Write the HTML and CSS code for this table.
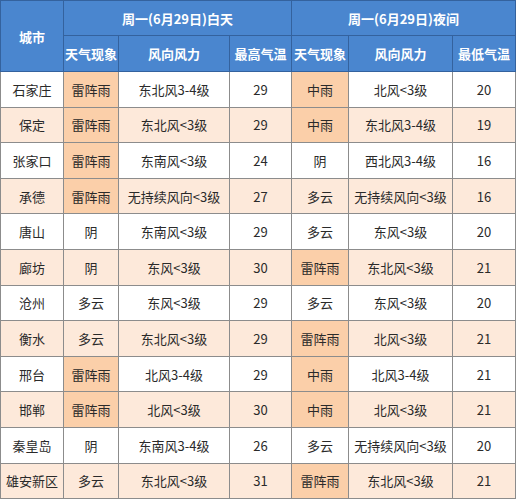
FILE: index.html
```html
<!DOCTYPE html>
<html lang="zh">
<head>
<meta charset="utf-8">
<link rel="stylesheet" href="styles.css">
</head>
<body>
<table class="wx">
  <colgroup>
    <col class="c1"><col class="c2"><col class="c3"><col class="c4"><col class="c5"><col class="c6"><col class="c7">
  </colgroup>
  <thead>
    <tr class="h1">
      <th rowspan="2">城市</th>
      <th colspan="3">周一(6月29日)白天</th>
      <th colspan="3">周一(6月29日)夜间</th>
    </tr>
    <tr class="h2">
      <th>天气现象</th><th>风向风力</th><th>最高气温</th>
      <th>天气现象</th><th>风向风力</th><th>最低气温</th>
    </tr>
  </thead>
  <tbody>
    <tr><td>石家庄</td><td class="hi">雷阵雨</td><td>东北风3-4级</td><td>29</td><td class="hi">中雨</td><td>北风&lt;3级</td><td>20</td></tr>
    <tr class="alt"><td>保定</td><td class="hi">雷阵雨</td><td>东北风&lt;3级</td><td>29</td><td class="hi">中雨</td><td>东北风3-4级</td><td>19</td></tr>
    <tr><td>张家口</td><td class="hi">雷阵雨</td><td>东南风&lt;3级</td><td>24</td><td>阴</td><td>西北风3-4级</td><td>16</td></tr>
    <tr class="alt"><td>承德</td><td class="hi">雷阵雨</td><td>无持续风向&lt;3级</td><td>27</td><td>多云</td><td>无持续风向&lt;3级</td><td>16</td></tr>
    <tr><td>唐山</td><td>阴</td><td>东南风&lt;3级</td><td>29</td><td>多云</td><td>东风&lt;3级</td><td>20</td></tr>
    <tr class="alt"><td>廊坊</td><td>阴</td><td>东风&lt;3级</td><td>30</td><td class="hi">雷阵雨</td><td>东北风&lt;3级</td><td>21</td></tr>
    <tr><td>沧州</td><td>多云</td><td>东风&lt;3级</td><td>29</td><td>多云</td><td>东风&lt;3级</td><td>20</td></tr>
    <tr class="alt"><td>衡水</td><td>多云</td><td>东北风&lt;3级</td><td>29</td><td class="hi">雷阵雨</td><td>北风&lt;3级</td><td>21</td></tr>
    <tr><td>邢台</td><td class="hi">雷阵雨</td><td>北风3-4级</td><td>29</td><td class="hi">中雨</td><td>北风3-4级</td><td>21</td></tr>
    <tr class="alt"><td>邯郸</td><td class="hi">雷阵雨</td><td>北风&lt;3级</td><td>30</td><td class="hi">中雨</td><td>北风&lt;3级</td><td>21</td></tr>
    <tr><td>秦皇岛</td><td>阴</td><td>东南风3-4级</td><td>26</td><td>多云</td><td>无持续风向&lt;3级</td><td>20</td></tr>
    <tr class="alt"><td>雄安新区</td><td>多云</td><td>东北风&lt;3级</td><td>31</td><td class="hi">雷阵雨</td><td>东北风&lt;3级</td><td>21</td></tr>
  </tbody>
</table>
</body>
</html>
```

FILE: styles.css
```css
html, body {
  margin: 0;
  padding: 0;
  background: #ffffff;
}

.wx {
  border-collapse: collapse;
  table-layout: fixed;
  width: 515px;
  font-family: "Noto Sans CJK SC", "Noto Sans", "Liberation Sans", sans-serif;
  font-size: 13px;
  color: #2a2a2a;
}

.c1 { width: 63px; }
.c2 { width: 55px; }
.c3 { width: 111px; }
.c4 { width: 62px; }
.c5 { width: 57px; }
.c6 { width: 104px; }
.c7 { width: 63px; }

.wx th {
  background: #4a86cf;
  color: #ffffff;
  font-weight: bold;
  border: 1px solid #34629e;
  padding: 0;
  text-align: center;
  font-size: 13px;
}

.wx .h1 th { height: 34px; }
.wx .h2 th { height: 35px; }

.wx td {
  border: 1px solid #8c8c8c;
  text-align: center;
  padding: 0;
  height: 34.6px;
  background: #ffffff;
  white-space: nowrap;
}

.wx tr.alt td {
  background: #fde9da;
}

.wx td.hi,
.wx tr.alt td.hi {
  background: #fbcfa9;
}
```
